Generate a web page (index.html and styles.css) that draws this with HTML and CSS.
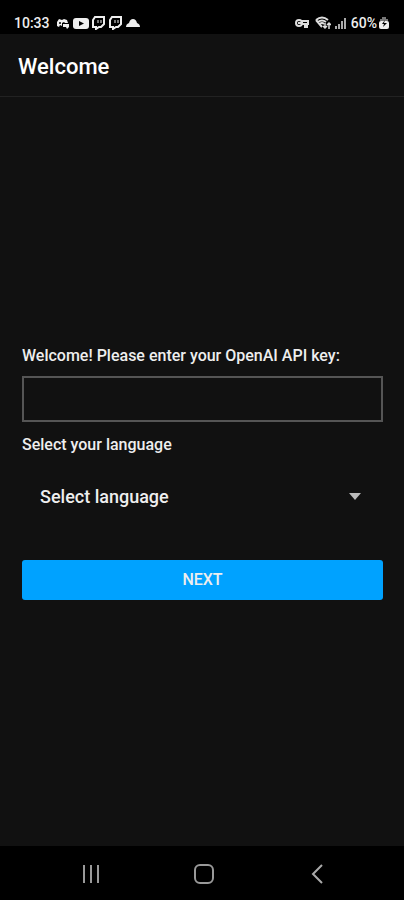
FILE: index.html
```html
<!DOCTYPE html>
<html lang="en">
<head>
<meta charset="utf-8">
<meta name="viewport" content="width=device-width, initial-scale=1">
<title>Welcome</title>
<link rel="stylesheet" href="styles.css">
</head>
<body>
<div class="status">
  <div class="status-group">
    <span class="clock">10:33</span>
    <svg width="14" height="14" viewBox="0 0 14 14" fill="#eee"><path d="M1 10V6l2-3 3 1 2-1 3 1 1 3H9L8 6 6 7v3l-2-1-1 2zM7 8h6v3l-2 2-1-2H7z"/><circle cx="4" cy="7" r="1" fill="#000"/></svg>
    <svg width="16" height="14" viewBox="0 0 16 14"><rect x="0" y="2" width="16" height="11" rx="3" fill="#eee"/><path d="M6 5v5l5-2.500z" fill="#000"/></svg>
    <svg class="twitch" width="13" height="14" viewBox="0 0 13 14" fill="none" stroke="#eee" stroke-width="2"><path d="M3 1h9v7l-3 3H7l-3 2v-2H1V4z"/><path d="M6 4v3M9 4v3" stroke-width="1"/></svg>
    <svg class="twitch" width="13" height="14" viewBox="0 0 13 14" fill="none" stroke="#eee" stroke-width="2"><path d="M3 1h9v7l-3 3H7l-3 2v-2H1V4z"/><path d="M6 4v3M9 4v3" stroke-width="1"/></svg>
    <svg width="14" height="14" viewBox="0 0 14 14" fill="#eee"><path d="M0 11Q0 8 3 7q1-4 4-4 3 0 4 4 3 1 3 4z"/></svg>
  </div>
  <div class="status-group status-right">
    <svg width="14" height="14" viewBox="0 0 14 14" fill="none" stroke="#ddd" stroke-width="2"><circle cx="4" cy="7" r="3"/><path d="M3 7h5M7 5h6v3h-1v3h-2V8H7"/></svg>
    <svg class="wifi" width="16" height="14" viewBox="0 0 16 14" fill="none" stroke="#ddd" stroke-width="2"><path d="M1 4q6-5 12 0M3 6q4-3 8 0M5 8q2-2 4 0M1 4l6 7"/><path d="M10 7v5M8 10l2 2 2-2M14 13V7M12 9l2-2 2 2" stroke-width="1.500"/></svg>
    <svg width="12" height="14" viewBox="0 0 12 14" fill="#aaa"><path d="M0 10h2v3H0zM3 8h2v5H3zM6 5h2v8H6zM9 2h2v11H9z"/></svg>
    <span class="battery">60%</span>
    <svg width="10" height="14" viewBox="0 0 10 14"><path d="M3 1h4v2h2v2H1V3h2z" fill="#777"/><rect x="0" y="5" width="10" height="8" rx="2" fill="#eee"/><path d="M6 4L3 8h2l-1 3 4-4H5z" fill="#000"/></svg>
  </div>
</div>
<header class="app-bar"><h1>Welcome</h1></header>
<main>
  <form class="setup">
    <label for="key">Welcome! Please enter your OpenAI API key:</label>
    <input class="key" id="key" type="text">
    <label for="language">Select your language</label>
    <div class="picker">
      <select id="language"><option>Select language</option></select>
      <svg class="arrow" width="12" height="7" viewBox="0 0 12 7"><path d="M0 0h12L6 7z" fill="#bbb"/></svg>
    </div>
    <button class="next" type="button">NEXT</button>
  </form>
</main>
<nav class="nav">
  <button type="button" aria-label="Recent apps"><svg width="20" height="20" viewBox="0 0 20 20" stroke="#999" stroke-width="2"><path d="M3 1v18M10 1v18M17 1v18"/></svg></button>
  <button type="button" aria-label="Home"><svg width="20" height="20" viewBox="0 0 20 20" fill="none" stroke="#999" stroke-width="2"><rect x="1" y="1" width="18" height="18" rx="5"/></svg></button>
  <button type="button" aria-label="Back"><svg width="20" height="20" viewBox="0 0 20 20" fill="none" stroke="#aaa" stroke-width="2"><path d="M15 1L6 10l9 9"/></svg></button>
</nav>
</body>
</html>
```
FILE: styles.css
```css
* { box-sizing: border-box; }

body {
  margin: 0;
  min-height: 100vh;
  display: flex;
  flex-direction: column;
  background: #111;
  color: #eee;
  font-family: Roboto, "Liberation Sans", sans-serif;
  font-weight: 500;
}

svg { display: block; flex: none; }

.status {
  display: flex;
  justify-content: space-between;
  height: 34px;
  padding: 12px 15px 0 14px;
  background: #000;
  font-size: 14px;
  line-height: 22px;
}

.status-group { display: flex; align-items: center; gap: 3px; }
.clock { margin-right: 3px; }
.twitch { margin-right: 1px; }
.status-right { gap: 2px; }
.wifi { margin: 0 2px 0 4px; }
.battery { margin-left: 2px; }

.app-bar {
  display: flex;
  align-items: center;
  height: 63px;
  padding: 4px 18px 0;
  border-bottom: 1px solid #222;
}

h1 {
  margin: 0;
  font-size: 22px;
  line-height: 28px;
  font-weight: 500;
  color: #fff;
}

main {
  flex: 1;
  display: flex;
  align-items: center;
  padding: 2px 21px 0 22px;
}

.setup { flex: 1; display: flex; flex-direction: column; }

label { font-size: 16px; line-height: 20px; }

.key {
  width: 100%;
  height: 46px;
  margin: 10px 0 13px;
  padding: 0 12px;
  border: 2px solid #555;
  border-radius: 0;
  background: transparent;
  color: inherit;
  font: inherit;
}

.picker { position: relative; margin: 17px 0 38px; }

select {
  display: block;
  width: 100%;
  height: 50px;
  padding: 0 40px 0 18px;
  appearance: none;
  border: 0;
  background: transparent;
  color: inherit;
  font: inherit;
  font-size: 18px;
}

.arrow {
  position: absolute;
  right: 22px;
  top: 21px;
  pointer-events: none;
}

.next {
  height: 40px;
  border: 0;
  border-radius: 3px;
  background: #00a2ff;
  color: #eee;
  font: inherit;
  font-size: 16px;
}

.nav {
  display: flex;
  height: 54px;
  padding: 2px 30px 0 34px;
  background: #000;
}

.nav button {
  flex: 1;
  display: flex;
  align-items: center;
  justify-content: center;
  padding: 0;
  border: 0;
  background: transparent;
}
```
